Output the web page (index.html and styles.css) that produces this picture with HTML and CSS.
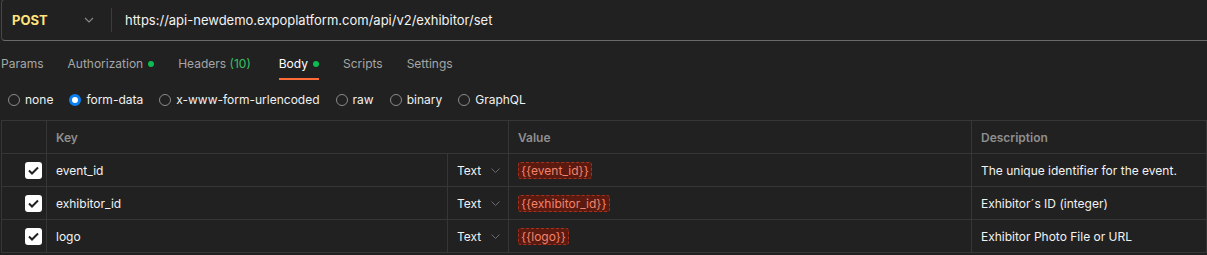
FILE: index.html
```html
<!DOCTYPE html>
<html>
<head>
<meta charset="utf-8">
<link rel="stylesheet" href="styles.css">
</head>
<body>
<div class="urlbar">
  <div class="method">
    <span class="method-name">POST</span>
    <svg class="chev" width="10" height="6" viewBox="0 0 10 6"><path d="M1 1l4 4 4-4" fill="none" stroke="#8a8a8a" stroke-width="1.1"/></svg>
  </div>
  <div class="url">https://api-newdemo.expoplatform.com/api/v2/exhibitor/set</div>
</div>

<div class="tabs">
  <div class="tab">Params</div>
  <div class="tab">Authorization<span class="dot"></span></div>
  <div class="tab headers">Headers&nbsp;<span class="count">(10)</span></div>
  <div class="tab active">Body<span class="dot"></span></div>
  <div class="tab">Scripts</div>
  <div class="tab">Settings</div>
</div>

<div class="radios">
  <label class="radio"><span class="circle"></span>none</label>
  <label class="radio"><span class="circle on"></span>form-data</label>
  <label class="radio"><span class="circle"></span>x-www-form-urlencoded</label>
  <label class="radio"><span class="circle"></span>raw</label>
  <label class="radio"><span class="circle"></span>binary</label>
  <label class="radio"><span class="circle"></span>GraphQL</label>
</div>

<div class="table">
  <div class="cell head"></div>
  <div class="cell head span2">Key</div>
  <div class="cell head">Value</div>
  <div class="cell head">Description</div>

  <div class="cell check"><span class="box"><svg width="11" height="9" viewBox="0 0 11 9"><path d="M1 4.5l3 3 6-6" fill="none" stroke="#212121" stroke-width="2"/></svg></span></div>
  <div class="cell">event_id</div>
  <div class="cell type">Text<svg class="tchev" width="9" height="5" viewBox="0 0 9 5"><path d="M0.5 0.5l4 4 4-4" fill="none" stroke="#6b6b6b" stroke-width="1"/></svg></div>
  <div class="cell"><span class="chip">{{event_id}}</span></div>
  <div class="cell">The unique identifier for the event.</div>

  <div class="cell check"><span class="box"><svg width="11" height="9" viewBox="0 0 11 9"><path d="M1 4.5l3 3 6-6" fill="none" stroke="#212121" stroke-width="2"/></svg></span></div>
  <div class="cell">exhibitor_id</div>
  <div class="cell type">Text<svg class="tchev" width="9" height="5" viewBox="0 0 9 5"><path d="M0.5 0.5l4 4 4-4" fill="none" stroke="#6b6b6b" stroke-width="1"/></svg></div>
  <div class="cell"><span class="chip">{{exhibitor_id}}</span></div>
  <div class="cell">Exhibitor´s ID (integer)</div>

  <div class="cell check"><span class="box"><svg width="11" height="9" viewBox="0 0 11 9"><path d="M1 4.5l3 3 6-6" fill="none" stroke="#212121" stroke-width="2"/></svg></span></div>
  <div class="cell">logo</div>
  <div class="cell type">Text<svg class="tchev" width="9" height="5" viewBox="0 0 9 5"><path d="M0.5 0.5l4 4 4-4" fill="none" stroke="#6b6b6b" stroke-width="1"/></svg></div>
  <div class="cell"><span class="chip">{{logo}}</span></div>
  <div class="cell">Exhibitor Photo File or URL</div>
</div>
</body>
</html>
```

FILE: styles.css
```css
* { box-sizing: border-box; }
html, body { margin: 0; padding: 0; }
body {
  background: #212121;
  font-family: Inter, "Noto Sans", sans-serif;
  color: #e6e6e6;
  overflow: hidden;
  height: 255px;
}

.urlbar {
  margin: -1px 0 0 1px;
  width: calc(100% + 20px);
  height: 42px;
  border: 1px solid #464646;
  border-bottom-color: #6a6a6a;
  border-radius: 4px;
  display: flex;
  align-items: center;
}
.method {
  width: 110px;
  height: 24px;
  padding-left: 10px;
  padding-right: 17px;
  display: flex;
  align-items: center;
  justify-content: space-between;
  border-right: 1px solid #3d3d3d;
}
.method-name {
  color: #ffe47e;
  font-weight: 700;
  font-size: 13px;
}
.url {
  padding-left: 13px;
  font-size: 13px;
  color: #f2f2f2;
}

.tabs {
  display: flex;
  gap: 24px;
  margin-top: 15px;
  padding-left: 1px;
  font-size: 12px;
}
.tab {
  color: #a6a6a6;
  line-height: 16px;
  padding-bottom: 6px;
  border-bottom: 2px solid transparent;
  display: flex;
  align-items: center;
}
.tab.headers { margin-right: 4px; }
.tab.active {
  color: #ffffff;
  border-bottom-color: #ff6c37;
}
.dot {
  width: 6px;
  height: 6px;
  border-radius: 50%;
  background: #0cbb52;
  margin-left: 5px;
}
.count { color: #34c164; }

.radios {
  display: flex;
  gap: 16px;
  margin-top: 12px;
  padding-left: 8px;
  font-size: 12px;
  line-height: 16px;
  color: #f0f0f0;
}
.radio { display: flex; align-items: center; gap: 5px; }
.circle {
  width: 12px;
  height: 12px;
  border-radius: 50%;
  border: 1px solid #8a8a8a;
}
.circle.on {
  border: 3px solid #0a7ff2;
  background: #fff;
}

.table {
  margin: 12px 0 0 1px;
  border-left: 1px solid #363636;
  border-top: 1px solid #363636;
  display: grid;
  grid-template-columns: 45px 401px 61px 463px 1fr;
  grid-auto-rows: 33px;
  font-size: 12px;
}
.cell {
  border-right: 1px solid #363636;
  border-bottom: 1px solid #363636;
  padding-left: 9px;
  display: flex;
  align-items: center;
  color: #f2f2f2;
  white-space: nowrap;
}
.head {
  color: #8f8f8f;
  font-weight: 600;
}
.span2 { grid-column: span 2; }
.check {
  justify-content: flex-end;
  padding-right: 4px;
}
.box {
  width: 17px;
  height: 17px;
  border-radius: 3px;
  background: #ffffff;
  display: flex;
  align-items: center;
  justify-content: center;
}
.type { gap: 10px; }
.chip {
  background: #5a1a10;
  border: 1px dashed #a3321e;
  border-radius: 3px;
  color: #f3836c;
  padding: 0 2px;
  line-height: 15px;
}
```
